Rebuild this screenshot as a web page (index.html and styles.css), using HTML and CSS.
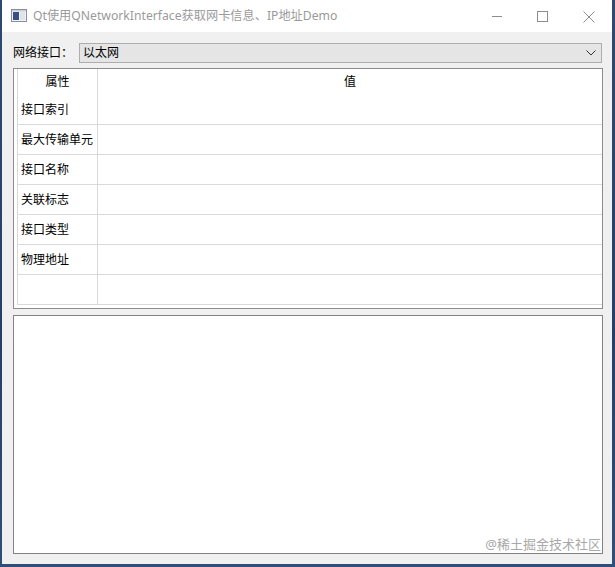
FILE: index.html
```html
<!DOCTYPE html>
<html lang="zh-CN">
<head>
<meta charset="utf-8">
<title>Qt Demo</title>
<link rel="stylesheet" href="styles.css">
</head>
<body>
<div class="window">
  <div class="titlebar">
    <svg class="app-icon" width="16" height="13" viewBox="0 0 16 13">
      <rect x="0.5" y="0.5" width="15" height="12" fill="#f4f4f4" stroke="#8a8f99"/>
      <rect x="2" y="3" width="6" height="8" fill="#3a4f86"/>
      <rect x="9" y="3" width="5" height="8" fill="#dfe3ea"/>
      <rect x="1" y="1" width="14" height="1.5" fill="#c9ced8"/>
    </svg>
    <span class="title">Qt使用QNetworkInterface获取网卡信息、IP地址Demo</span>
    <div class="controls">
      <svg class="ctl" width="46" height="32" viewBox="0 0 46 32"><line x1="18" y1="16.5" x2="28" y2="16.5" stroke="#8c8c8c" stroke-width="1"/></svg>
      <svg class="ctl" width="46" height="32" viewBox="0 0 46 32"><rect x="17.5" y="11.5" width="10" height="10" fill="none" stroke="#8c8c8c" stroke-width="1"/></svg>
      <svg class="ctl" width="46" height="32" viewBox="0 0 46 32"><path d="M17.5 11.5 L28.5 22.5 M28.5 11.5 L17.5 22.5" stroke="#8c8c8c" stroke-width="1"/></svg>
    </div>
  </div>
  <div class="content">
    <div class="iface-row">
      <span class="label">网络接口：</span>
      <div class="combo">
        <span class="combo-text">以太网</span>
        <svg class="chevron" width="10" height="6" viewBox="0 0 10 6"><path d="M0.5 0.5 L5 5 L9.5 0.5" fill="none" stroke="#333" stroke-width="1"/></svg>
      </div>
    </div>
    <div class="table-frame">
      <div class="grid">
        <div class="cell head key">属性</div>
        <div class="cell head val">值</div>
        <div class="cell key row">接口索引</div><div class="cell val row"></div>
        <div class="cell key row">最大传输单元</div><div class="cell val row"></div>
        <div class="cell key row">接口名称</div><div class="cell val row"></div>
        <div class="cell key row">关联标志</div><div class="cell val row"></div>
        <div class="cell key row">接口类型</div><div class="cell val row"></div>
        <div class="cell key row">物理地址</div><div class="cell val row"></div>
        <div class="cell key row"></div><div class="cell val row"></div>
      </div>
    </div>
    <div class="output">
      <span class="watermark">@稀土掘金技术社区</span>
    </div>
  </div>
</div>
</body>
</html>
```

FILE: styles.css
```css
html, body {
  margin: 0;
  padding: 0;
}
body {
  width: 615px;
  height: 567px;
  overflow: hidden;
  background: linear-gradient(180deg, #2d4a70 0%, #24406a 60%, #2e5078 100%);
  font-family: "Noto Sans", "Noto Sans CJK SC", sans-serif;
  font-size: 12px;
  color: #000;
}
.window {
  margin-left: 2px;
  width: 610px;
  height: 564px;
  background: #f0f0f0;
  display: flex;
  flex-direction: column;
}
.titlebar {
  height: 32px;
  background: #ffffff;
  display: flex;
  align-items: center;
  flex: none;
}
.app-icon {
  margin-left: 9px;
  margin-top: -1px;
  flex: none;
}
.title {
  margin-left: 6px;
  color: #9a9a9a;
  font-size: 12.2px;
  white-space: nowrap;
  flex: 1;
  line-height: 16px;
}
.controls {
  display: flex;
  align-self: flex-start;
}
.ctl {
  display: block;
}
.content {
  flex: 1;
  display: flex;
  flex-direction: column;
  padding: 11px 9px 10px 11px;
}
.iface-row {
  display: flex;
  align-items: center;
  height: 20px;
  margin-right: 1px;
}
.label {
  width: 66px;
  flex: none;
  line-height: 16px;
}
.combo {
  flex: 1;
  height: 18px;
  border: 1px solid #adadad;
  background: #e5e5e5;
  display: flex;
  align-items: center;
  padding: 0 5px 0 3px;
}
.combo-text {
  flex: 1;
  line-height: 16px;
}
.chevron {
  display: block;
}
.table-frame {
  margin-top: 5px;
  height: 236px;
  border: 1px solid #8c8c8c;
  background: #fff;
  padding: 0 0 3px 3px;
  box-sizing: content-box;
}
.grid {
  display: grid;
  grid-template-columns: 80px 1fr;
  grid-template-rows: 26px repeat(7, 30px);
  border-left: 1px solid #d9d9d9;
  height: 236px;
}
.cell {
  display: flex;
  align-items: center;
  line-height: 16px;
}
.cell.key {
  border-right: 1px solid #d9d9d9;
  padding-left: 3px;
}
.cell.row {
  border-bottom: 1px solid #d9d9d9;
}
.cell.head {
  justify-content: center;
  padding-left: 0;
}
.output {
  margin-top: 6px;
  flex: 1;
  border: 1px solid #828282;
  background: #fff;
  position: relative;
}
.watermark {
  position: absolute;
  right: 1px;
  bottom: 1px;
  color: #a8a8a8;
  font-size: 13px;
  line-height: 16px;
  white-space: nowrap;
}
```
